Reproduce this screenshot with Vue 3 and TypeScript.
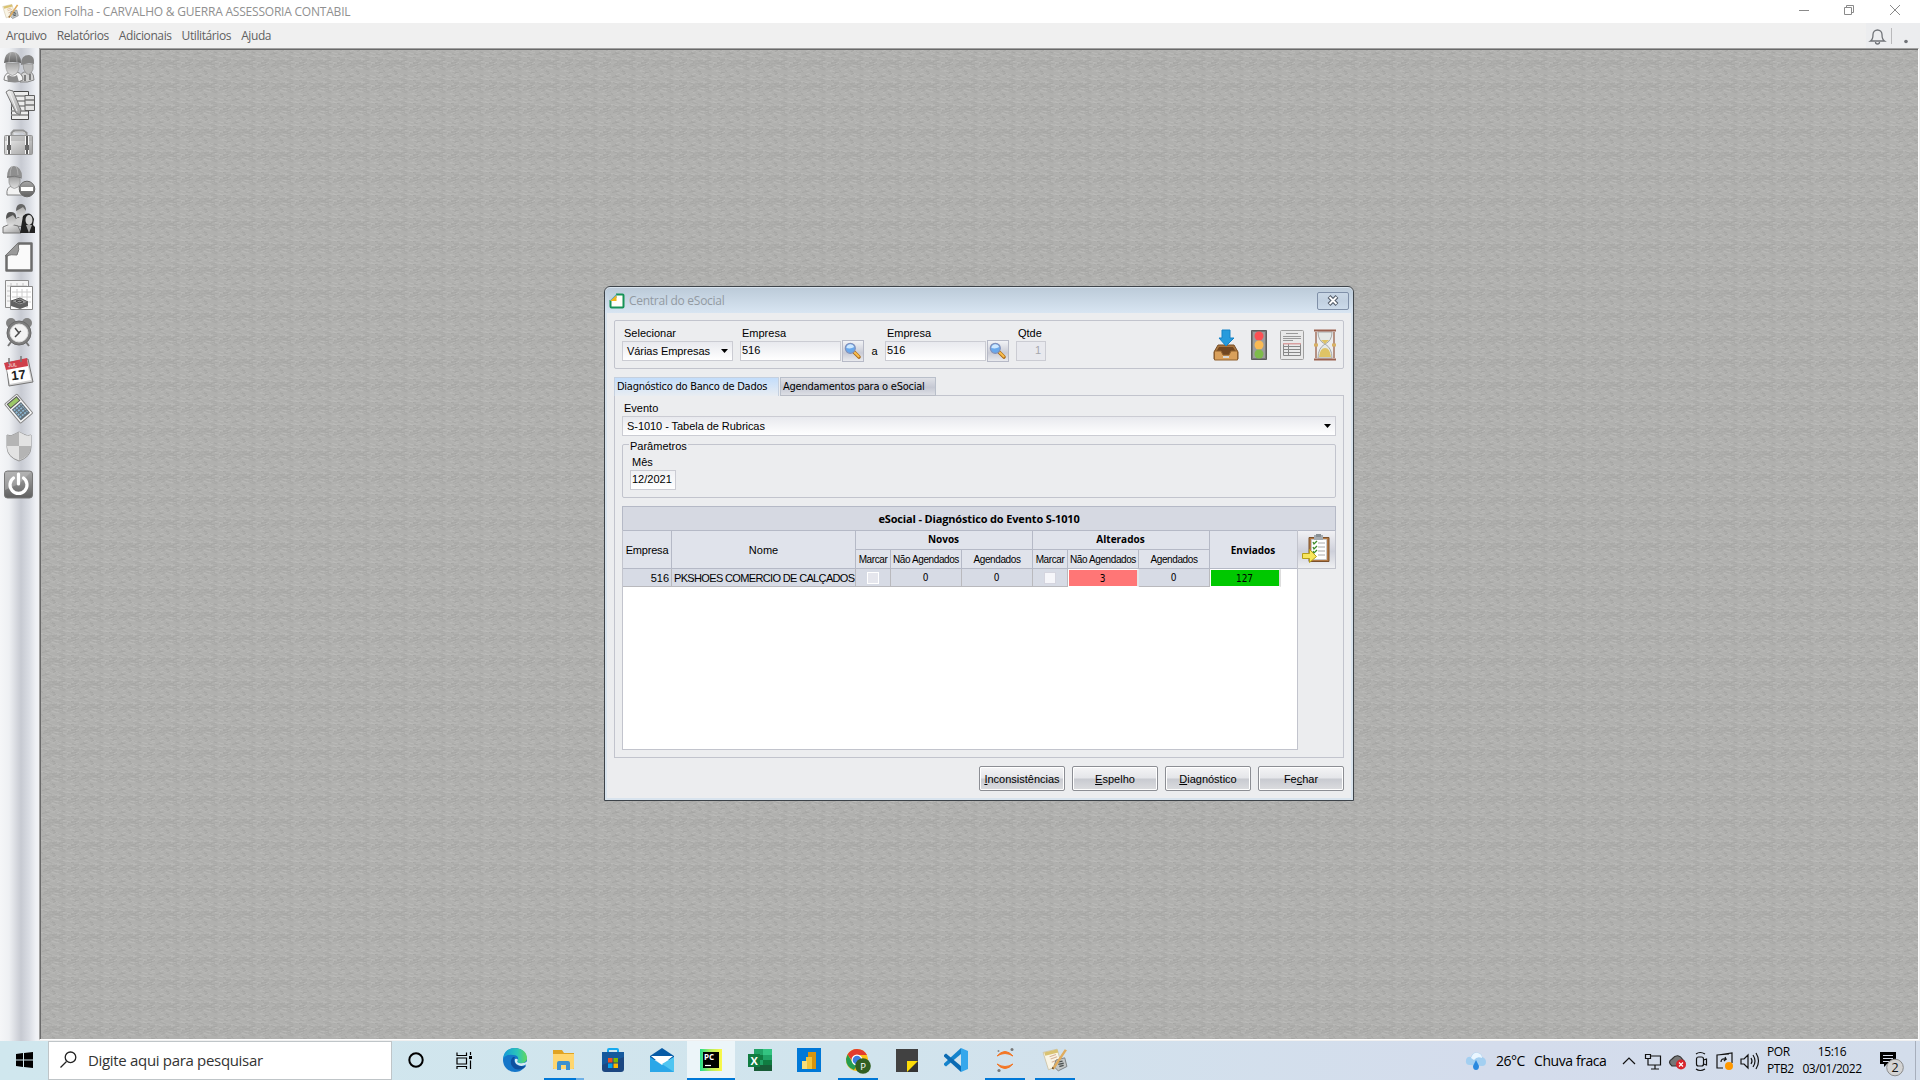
<script setup lang="ts">
import { ref } from 'vue'

interface Stroke { x: number; y: number; w: number; h: number; slope: number; color: string }

// Woven desktop texture: short slanted strokes repeated on a 38 x 23 tile.
function weave(): Stroke[] {
  let seed = 41
  const next = () => {
    seed = (seed * 16807) % 2147483647
    return seed / 2147483647
  }
  const tones = ['#bbbbb9', '#a5a5a3', '#b8b8b6', '#a8a8a6', '#a9a9a7', '#b5b5b3']
  return Array.from({ length: 92 }, (_, i) => ({
    x: Math.round(next() * 35),
    y: Math.round(next() * 21) + 0.5,
    w: 3 + Math.round(next() * 5),
    h: 1,
    slope: next() > 0.45 ? 1.5 : -1.5,
    color: tones[i % tones.length],
  }))
}
const strokes = weave()

const menus = ['Arquivo', 'Relatórios', 'Adicionais', 'Utilitários', 'Ajuda']
const tools = ['workers', 'edit', 'case', 'dismiss', 'people', 'page', 'sheets', 'alarm', 'calendar', 'calc', 'shield', 'power']
const tasks = [
  { id: 'edge', bar: 0 }, { id: 'folder', bar: 32 }, { id: 'store', bar: 0 }, { id: 'mail', bar: 0 },
  { id: 'pycharm', bar: 48 }, { id: 'excel', bar: 0 }, { id: 'powerbi', bar: 0 }, { id: 'chrome', bar: 40 },
  { id: 'notes', bar: 0 }, { id: 'code', bar: 0 }, { id: 'jupyter', bar: 40 }, { id: 'dexion', bar: 40 },
]
const companyFrom = ref('516')
const companyTo = ref('516')
const month = ref('12/2021')
const row = { id: 516, name: 'PKSHOES COMERCIO DE CALÇADOS', newPending: 0, newScheduled: 0, changedPending: 3, changedScheduled: 0, sent: 127 }
</script>

<template>
  <div class="screen">
    <svg width="0" height="0" class="defs">
      <defs>
        <linearGradient id="silver" x1="0" y1="0" x2="1" y2="1"><stop offset="0" stop-color="#f6f6f6" /><stop offset="1" stop-color="#9c9c9c" /></linearGradient>
        <linearGradient id="steel" x1="0" y1="0" x2="0" y2="1"><stop offset="0" stop-color="#a8a8a8" /><stop offset="1" stop-color="#606060" /></linearGradient>
        <linearGradient id="skin" x1="0" y1="0" x2="0" y2="1"><stop offset="0" stop-color="#a0a0a0" /><stop offset=".6" stop-color="#c6c6c6" /><stop offset="1" stop-color="#dedede" /></linearGradient>
        <symbol id="dexion" viewBox="0 0 24 24">
          <path d="M1 5 14 2 18 16 6 21Z" fill="#faf5e5" stroke="#c9bd9d" stroke-width=".7" />
          <path d="m2 5 12-3 1 3-12 3Z" fill="#d9c272" />
          <path d="m7 9 6-2m-5 4 6-2m-5 5 5-2" stroke="#d8b49c" stroke-width="1" />
          <path d="m13 12 8-2 2 8-8 4-4-4Z" fill="#c3c7c7" stroke="#75797a" stroke-width=".8" />
          <path d="m14 14 5-1m-4 3 5-1m-4 3 4-1" stroke="#4e5454" stroke-width="1.3" />
          <path d="m9 20 12-18 2 1L11 21Z" fill="#e0ac5e" /><path d="m9 20 1-2 1 2Z" fill="#5a3b20" />
        </symbol>
        <symbol id="lens" viewBox="0 0 18 18">
          <path d="m10 10 5 5" stroke="#a96817" stroke-width="3.6" stroke-linecap="round" />
          <path d="m10.7 10.5 4 4" stroke="#f9bd4d" stroke-width="2" stroke-linecap="round" />
          <circle cx="6.3" cy="6.3" r="5" fill="#69a8ec" stroke="#8191bc" stroke-width="1.2" />
          <path d="M2.4 6a4 4 0 0 1 7.8-1Q7 7.2 2.4 6Z" fill="#cde7ff" />
        </symbol>
      </defs>
    </svg>

    <header class="titlebar">
      <svg width="17" height="17"><use href="#dexion" /></svg>
      <span class="app-title">Dexion Folha - CARVALHO &amp; GUERRA ASSESSORIA CONTABIL</span>
      <svg class="window-buttons" width="104" height="24" fill="none" stroke="#8a8a8a">
        <path d="M0 10.500h10M45.500 7.500h7v7h-7zM47.500 7.500v-2h7v7h-2M91 5l10 10m0-10L91 15" />
      </svg>
    </header>

    <nav class="menubar">
      <span v-for="item in menus" :key="item">{{ item }}</span>
      <div class="alerts">
        <svg width="54" height="25" fill="none" stroke="#707378">
          <path d="M4.500 18Q7 16.500 7 11.500a4.500 4.500 0 0 1 9 0q0 5 2.500 6.500Z" stroke-width="1.300" /><path d="M9.500 19a2 2 0 0 0 4 0" stroke-width="1.300" />
          <path d="M25.500 5v16" stroke="#b9b9bb" /><circle cx="40" cy="18.500" r="1.800" fill="#707378" stroke="none" />
        </svg>
      </div>
    </nav>

    <main class="body">
      <aside class="toolbar">
        <svg v-for="tool in tools" :key="tool" width="32" height="32" viewBox="0 0 32 32">
          <template v-if="tool === 'workers'">
            <path d="M17 31q-1-8 4-10h7q3 2 3 8-6 3-14 2Z" fill="#d2d2d2" stroke="#707070" stroke-width=".8" />
            <path d="M20 13h10q1 6-2 9-3 3-5 0-3-3-3-9Z" fill="#b9b9b9" stroke="#8f8f8f" stroke-width=".7" /><path d="M18 13q0-9 8-9 6 1 5 9l-5-1-8 2Z" fill="#858585" />
            <path d="M1 29q0-7 7-8h6q6 2 6 8-7 4-19 0Z" fill="#f4f4f4" stroke="#777" stroke-width=".9" />
            <path d="M3 12h13q1 7-3 11-4 3-7 0-4-4-3-11Z" fill="url(#skin)" stroke="#929292" stroke-width=".7" /><path d="M1 12q1-12 9-11 8 1 8 11-8-2-17 0Z" fill="url(#steel)" />
            <path d="m4 25 2-1q4 3 8 0l2 7H5Z" fill="#8d8d8d" /><path d="M22 24v6m5-7v6" stroke="#7d7d7d" stroke-width="2" />
            <path d="M8 1q-2 5-2 10M12 1q2 5 2 10" fill="none" stroke="#bababa" stroke-width=".6" />
          </template>
          <template v-else-if="tool === 'edit'">
            <path d="M8.500 2.500h17v28h-17z" fill="#ededed" stroke="#4b4b4b" /><path d="M8 7h17m-17 5h17m-17 5h17m-17 5h17m-17 4h17" stroke="#888" stroke-width="1.500" />
            <path d="M22 6.500h9.500v15H22z" fill="#e3e3e3" stroke="#616161" /><path d="M22 11h9m-9 5h9" stroke="#777" stroke-width="1.500" />
            <path d="m3 3 3-2 4 1 8 19-1 5-4-2Z" fill="url(#silver)" stroke="#777" /><path d="m7 4 7 18" stroke="#f3f3f3" />
          </template>
          <template v-else-if="tool === 'case'">
            <path d="M9 9V6l2-2h9l3 2v3" fill="none" stroke="#929292" stroke-width="3" /><path d="M10 9V6l2-1h8l2 1v3" fill="none" stroke="#ddd" />
            <rect x="1.500" y="8.500" width="28" height="19" rx="1" fill="url(#silver)" stroke="#969696" /><path d="M2 9h27v5H2Z" fill="#aaa" opacity=".55" />
            <path d="M6 9v18m18-18v18" stroke="#f7f7f7" stroke-width="4" /><path d="M6 9v18m18-18v18" stroke="#5b5b5b" stroke-width="2" /><path d="M4 18h4v5H4zm18 0h4v5h-4z" fill="#666" />
          </template>
          <template v-else-if="tool === 'dismiss'">
            <path d="M4 30q-1-8 5-9h5q6 2 6 9Z" fill="#f2f2f2" stroke="#777" stroke-width=".9" /><path d="M6 12h11q1 7-2 10-4 3-7 0-3-3-2-10Z" fill="url(#skin)" stroke="#929292" stroke-width=".7" />
            <path d="M4 13Q4 1 11 1q8 1 8 11-7-1-15 1Z" fill="#8f8f8f" /><path d="M9 1q-2 4-2 10m6-10q2 4 2 9" stroke="#bbb" stroke-width=".7" fill="none" /><path d="M4 12q8-2 15 1" stroke="#777" fill="none" /><circle cx="24" cy="24" r="7.800" fill="url(#steel)" stroke="#686868" /><rect x="18" y="22" width="12" height="4" fill="#fff" />
          </template>
          <template v-else-if="tool === 'people'">
            <path d="M10 23q0-9 8-9 10 0 11 10Z" fill="#cfcfcf" stroke="#777" /><ellipse cx="18" cy="8" rx="4.500" ry="7" fill="url(#skin)" /><path d="M13 8q0-7 5-7t5 7l-3-4q-3 2-7 4Z" fill="#666" />
            <path d="M0 30v-6l7-3 8 2 3 7Z" fill="url(#silver)" stroke="#777" /><ellipse cx="8" cy="16" rx="5" ry="7" fill="url(#skin)" /><path d="M3 16q0-8 5-7 6 0 5 7l-3-4q-4 2-7 4Z" fill="#555" />
            <path d="m17 30 3-17q7-6 11 3l-1 6 2 2v6Z" fill="#222" /><ellipse cx="26" cy="17" rx="3.500" ry="5" fill="#d3d3d3" /><path d="m23 22 3 8 3-8" fill="#aaa" />
          </template>
          <template v-else-if="tool === 'page'">
            <path d="M3.500 15v14.500h25V2.500H16Z" fill="#fafafa" stroke="#6c6c6c" stroke-width="2.500" stroke-linejoin="round" /><path d="M2 15 15 2q2 7-1 12-5-1-12 1Z" fill="#999" stroke="#777" />
          </template>
          <template v-else-if="tool === 'sheets'">
            <path d="M2.500 1.500h23v27h-23z" fill="#f5f5f5" stroke="#8d8d8d" /><path d="M4 7h20M4 12h20M4 17h20M4 22h20M8 4v21m6-21v21m6-21v21" stroke="#c4c4c4" />
            <path d="M7.500 7.500h22v23h-22z" fill="#fff" stroke="#888" /><path d="M9 13h19M9 18h19M9 23h19M14 10v19m5-19v19m5-19v19" stroke="#cecece" />
            <path d="m8 22 9-3 8 4-8 3Z" fill="#999" stroke="#555" /><path d="m8 22 9 4v4l-9-3Zm9 4 8-3v4l-8 3Z" fill="#626262" /><path d="m13 22 4-1 3 2-4 1Z" fill="none" stroke="#444" />
          </template>
          <template v-else-if="tool === 'alarm'">
            <path d="m8 25-3 4m18-4 3 4M9 5l3 2m9-2-3 2" stroke="#777" stroke-width="2" /><circle cx="8" cy="6" r="5" fill="#828282" /><circle cx="24" cy="6" r="5" fill="#828282" />
            <circle cx="16" cy="16" r="12" fill="#7d7d7d" stroke="#696969" /><circle cx="16" cy="16" r="9" fill="#f3f3f3" stroke="#ddd" /><path d="m12 11 4 5-4 4m3-4 3-2" fill="none" stroke="#494949" stroke-width="1.500" />
          </template>
          <template v-else-if="tool === 'calendar'">
            <path d="m3 8 22-4 5 23-24 4Z" fill="#d3d3d3" stroke="#777" /><path d="m3 10 21-3 4 18-21 4Z" fill="#fff" /><path d="m1 8 23-5 1 8-22 4Z" fill="#cf3f4a" />
            <path d="M6 3v6m12-8v6" stroke="#777" stroke-width="1.500" /><text x="8" y="24.500" font-size="13" font-weight="700" transform="rotate(-7 15 18)" fill="#222">17</text><text x="5" y="12" font-size="5" fill="#fff" transform="rotate(-7 8 11)">JUL</text>
          </template>
          <template v-else-if="tool === 'calc'">
            <g transform="rotate(-40 16 16)"><rect x="8" y="3" width="16" height="25" rx="1" fill="#f8f8f8" stroke="#888" /><path d="M10 5h12v5H10z" fill="#9cc867" stroke="#555" /><path d="M10 12h12v14H10z" fill="#657179" /><path d="M11 14h10m-10 3h10m-10 3h10m-10 3h10" stroke="#8cb8d4" stroke-width="1.800" stroke-dasharray="2 1" /></g>
          </template>
          <template v-else-if="tool === 'shield'">
            <path d="m16 1 4 2q5 3 8 1v12q0 10-12 14Q4 26 4 16V4q4 2 8-1Z" fill="#d9d9d9" stroke="#969696" /><path d="M16 1v14H4V4q4 2 8-1Z" fill="#b5b5b5" /><path d="M16 15H4q0 10 12 14Zm0-14v14h12V4q-4 2-8-1Z" fill="#e2e2e2" /><path d="M16 15h12q0 10-12 14Z" fill="#b4b4b4" />
          </template>
          <template v-else>
            <rect x="1.500" y="2" width="28" height="27" rx="3" fill="url(#steel)" stroke="#777" /><path d="M2 3h26L16 15 2 21Z" fill="#c9c9c9" opacity=".4" /><path d="M10.500 9a8.500 8.500 0 1 0 10 0M15.500 5v10" fill="none" stroke="#fff" stroke-width="3.200" stroke-linecap="round" />
          </template>
        </svg>
      </aside>

      <section class="workspace">
        <svg class="texture" width="100%" height="100%">
          <defs>
            <pattern id="weave" width="38" height="23" patternUnits="userSpaceOnUse">
              <rect width="38" height="23" fill="#b0b0ae" />
              <path v-for="(s, i) in strokes" :key="i" :d="`M${s.x} ${s.y}l${s.w} ${s.slope}`" :stroke="s.color" :stroke-width="s.h" />
            </pattern>
          </defs>
          <rect width="100%" height="100%" fill="url(#weave)" />
        </svg>

        <div class="dialog">
          <div class="dialog-title">
            <svg width="16" height="16"><path d="M6 1.500h7.500q1 0 1 1v11q0 1-1 1h-11q-1 0-1-1V6Z" fill="#fffef8" stroke="#179357" stroke-width="2" /><path d="M0 0h7v7H0Z" fill="#c4d2df" /><path d="M1 7.500 7.500 1v3.500L4.500 8H1Z" fill="#299ed8" /><path d="M1 8 7.500 2v6Z" fill="#f3b61d" /></svg>
            <span>Central do eSocial</span>
            <button class="close"><svg width="14" height="11"><path d="m3 1.500 8 8m0-8-8 8" stroke="#535d69" stroke-width="4" /><path d="m3.500 2 7 7m0-7-7 7" stroke="#fff" stroke-width="1.800" /></svg></button>
          </div>

          <div class="filter">
            <div class="field kind"><label>Selecionar</label><div class="combo"><span>Várias Empresas</span><svg width="7" height="4"><path d="M0 0h7L3.500 4Z" /></svg></div></div>
            <div class="field company"><label>Empresa</label><div class="lookup"><div class="input">{{ companyFrom }}</div><button class="find"><svg width="18" height="18"><use href="#lens" /></svg></button></div></div>
            <span class="between">a</span>
            <div class="field company"><label>Empresa</label><div class="lookup"><div class="input">{{ companyTo }}</div><button class="find"><svg width="18" height="18"><use href="#lens" /></svg></button></div></div>
            <div class="field amount"><label>Qtde</label><div class="input disabled">1</div></div>
            <div class="actions">
              <svg width="24" height="31"><path d="m4 15-4 7v7h24v-7l-4-7Z" fill="#a9753e" stroke="#78502b" /><path d="M5 17h14l3 5h-5l-2 3H9l-2-3H2Z" fill="#714620" /><path d="M.500 21H7l2 4h6l2-4h6.500v9H.500Z" fill="#d9a05b" stroke="#8f602e" /><path d="M9 27h6" stroke="#d8d8d5" stroke-width="2" /><path d="M8 0h8v8h4l-8 8-7-8h3Z" fill="#279bdc" stroke="#1683c6" /></svg>
              <svg width="16" height="31"><path d="M.500.500h15v29H.500Z" fill="#777" stroke="#5d5d5d" /><path d="M2 2h12v26H2Z" fill="#9c9c9c" /><circle cx="8" cy="6" r="4.500" fill="#fb5053" /><circle cx="8" cy="15" r="4.500" fill="#faba53" /><circle cx="8" cy="24" r="4.500" fill="#7ebb4b" /></svg>
              <svg width="24" height="31"><rect x=".5" y=".5" width="23" height="29" rx="1" fill="#e9e9e9" stroke="#a0a0a0" /><path d="M6 3.500h12M3 6.500h18M3 8.500h18M3 10.500h10" stroke="#999" /><path d="M3.500 13.500h17v12h-17zm0 3h17m-17 3h17m-17 3h17M8.500 14v12" fill="none" stroke="#888" /><path d="M3 13h18v1.500H3Z" fill="#d9a0a0" /></svg>
              <svg width="22" height="32"><path d="M4 3h14q0 9-7 12-7-3-7-12Zm7 12q7 4 7 14H4q0-10 7-14Z" fill="#e5e9e6" stroke="#a8aaa8" /><path d="M7 11h8l-4 4Zm-2 17q1-9 6-9t6 9Z" fill="#dfc365" /><path d="M2 3v26M20 3v26" stroke="#b08878" stroke-width="1.800" /><path d="M0 1.500h22M0 30.500h22" stroke="#9b6250" stroke-width="2" /><path d="M0 16h4m14 0h4" stroke="#d9b264" stroke-width="3" /></svg>
            </div>
          </div>

          <div class="tabs">
            <div class="tab active"><span>Diagnóstico do Banco de Dados</span></div>
            <div class="tab second"><span>Agendamentos para o eSocial</span></div>
            <div class="tab-rest"></div>
          </div>

          <div class="page">
            <label class="event-label">Evento</label>
            <div class="combo event"><span>S-1010 - Tabela de Rubricas</span><svg width="7" height="4"><path d="M0 0h7L3.500 4Z" /></svg></div>
            <div class="params"><span class="legend">Parâmetros</span><label>Mês</label><div class="input month">{{ month }}</div></div>

            <div class="grid-title">eSocial - Diagnóstico do Evento S-1010</div>
            <div class="grid-area">
              <div class="grid">
                <div class="head">
                  <div class="cell tall id">Empresa</div><div class="cell tall who">Nome</div>
                  <div class="cell group new">Novos</div><div class="cell group changed">Alterados</div>
                  <div class="cell tall strong">Enviados</div>
                  <div class="cell small">Marcar</div><div class="cell small">Não Agendados</div><div class="cell small">Agendados</div>
                  <div class="cell small">Marcar</div><div class="cell small">Não Agendados</div><div class="cell small">Agendados</div>
                </div>
                <div class="row">
                  <div class="cell right">{{ row.id }}</div><div class="cell name"><span>{{ row.name }}</span></div>
                  <div class="cell"><i class="check off"></i></div><div class="cell num">{{ row.newPending }}</div><div class="cell num">{{ row.newScheduled }}</div>
                  <div class="cell"><i class="check"></i></div><div class="cell num pending">{{ row.changedPending }}</div><div class="cell num">{{ row.changedScheduled }}</div>
                  <div class="cell num sent">{{ row.sent }}</div>
                </div>
              </div>
              <button class="clipboard">
                <svg width="30" height="32"><path d="M7 3.500h20v24H7Z" fill="#b27945" stroke="#7a502b" /><path d="M9.500 5.500h15v20h-15Z" fill="#fff" stroke="#c9c9c9" /><path d="M12 1h9v5h-9Z" fill="#a5abb0" /><path d="M14 0h5v3h-5Z" fill="#888f94" /><path d="M16 9h7m-7 4h7m-7 4h7m-7 4h7" stroke="#aaa" /><path d="m11 8 1 2 3-3m-4 6 1 2 3-3m-4 5 1 2 3-3" fill="none" stroke="#3e8b28" stroke-width="1.300" /><path d="M.500 19.500h7v-4l7 7-7 6v-4h-7Z" fill="#f8e65c" stroke="#b69f18" /></svg>
              </button>
            </div>
          </div>

          <div class="footer">
            <button><span><u>I</u>nconsistências</span></button><button><span><u>E</u>spelho</span></button><button><span><u>D</u>iagnóstico</span></button><button><span>Fe<u>c</u>har</span></button>
          </div>
        </div>
      </section>
    </main>

    <footer class="taskbar">
      <div class="start"><svg width="17" height="18"><path d="m0 3 7-1v6.500H0Zm8-1 9-1v7.500H8ZM0 9.500h7V16l-7-1Zm8 0h9V17l-9-1Z" /></svg></div>
      <div class="search"><svg width="17" height="18" fill="none" stroke="#222" stroke-width="1.300"><circle cx="10.500" cy="6.300" r="5.300" /><path d="m6.500 10.500-6 6" /></svg><span>Digite aqui para pesquisar</span></div>
      <div class="sys"><svg width="16" height="16"><circle cx="8" cy="8" r="6.700" fill="none" stroke="#000" stroke-width="2" /></svg></div>
      <div class="sys"><svg width="17" height="17" fill="none" stroke="#000" stroke-width="1.200"><path d="M1 .500v3h9.500v-3M1 6h9.500v6H1zM1 17v-2.500h9.500V17M14.500 0v3M14.500 8.500V17" /><path d="M13 4h3v3h-3z" fill="#000" stroke="none" /></svg></div>
      <div v-for="task in tasks" :key="task.id" class="task" :class="{ current: task.id === 'pycharm' }">
        <svg width="26" height="26" viewBox="0 0 26 26">
          <template v-if="task.id === 'edge'">
            <defs><linearGradient id="edgeTop"><stop stop-color="#1399d9" /><stop offset=".6" stop-color="#2bc5b9" /><stop offset="1" stop-color="#62d85c" /></linearGradient></defs>
            <circle cx="13" cy="13" r="12" fill="#1476c9" /><path d="M1 12Q2 1 13 1q12 1 12 11-1 5-8 4-3-1-1-3 1-5-5-5Q4 7 1 12Z" fill="url(#edgeTop)" /><path d="M11 10q-4 4-1 9 4 6 12 2l2-2q-8 1-11-3-2-3 0-6Z" fill="#0e4f9e" /><path d="M13 12q-1 4 3 6 4 2 8-.5l1.500.5V14q-3 3-8.500 2-3-1-1-3-1-2-3-1Z" fill="#d6ebf3" />
          </template>
          <template v-else-if="task.id === 'folder'"><path d="M2 3h9l2 3h10v16H2Z" fill="#e0a322" /><path d="M2 7h21v14q0 1-1 1H3q-1 0-1-1Z" fill="#ffd66f" /><path d="M6 23v-7q0-2 2-2h9q2 0 2 2v7h-4v-5h-5v5Z" fill="#3c91d0" /></template>
          <template v-else-if="task.id === 'store'"><path d="M8 6V3q0-1 1-1h8q1 0 1 1v3" fill="none" stroke="#16aaf0" stroke-width="2" /><path d="M2 5h22v17q0 3-3 3H5q-3 0-3-3Z" fill="#1c4781" /><path d="M2 5h22v5L2 18Z" fill="#1261a9" opacity=".7" /><path fill="#f24f22" d="M8 11h4.500v4.500H8z" /><path fill="#7eb900" d="M13.500 11H18v4.500h-4.500z" /><path fill="#00a3ee" d="M8 16.500h4.500V21H8z" /><path fill="#feb800" d="M13.500 16.500H18V21h-4.500z" /></template>
          <template v-else-if="task.id === 'mail'"><path d="M1 9 13 1l12 8v4H1Z" fill="#075ba6" /><path d="m2 9 22 0-11 9Z" fill="#fff" /><path d="m1 10 12 8 12-8v15H1Z" fill="#2aa7e8" /><path d="m13 17 12-7v15Z" fill="#50c5f1" /></template>
          <template v-else-if="task.id === 'pycharm'"><defs><linearGradient id="pc"><stop stop-color="#22dc8b" /><stop offset=".5" stop-color="#b9ed5c" /><stop offset="1" stop-color="#fcf84a" /></linearGradient></defs><path fill="url(#pc)" d="M2 2h22v22H2z" /><path d="M5 5h16v16H5z" /><text x="6" y="13" font-size="8" font-weight="700" fill="#fff">PC</text><path d="M7 18.500h6" stroke="#fff" stroke-width="1.200" /></template>
          <template v-else-if="task.id === 'excel'"><path d="M7 2h18v22H7z" fill="#21a366" /><path d="M16 2h9v6h-9z" fill="#33c481" /><path d="M7 8h9v5H7zm9 5h9v5h-9z" fill="#107c41" /><path d="M7 18h18v6H7z" fill="#185c37" /><path d="M1 7h12v13H1z" fill="#107c41" /><text x="3.500" y="17.500" font-size="11" font-weight="700" fill="#fff">X</text></template>
          <template v-else-if="task.id === 'powerbi'"><path d="M1 1h24v24H1z" fill="#0078d7" /><path d="M14 5h6v17h-8V5Z" fill="#d5940f" /><path d="M10 10h6v12h-6Z" fill="#f1c43a" /><path d="M6 14h5v8H6Z" fill="#f8df79" /></template>
          <template v-else-if="task.id === 'chrome'"><circle cx="12" cy="13" r="11" fill="#fbc116" /><path d="M2.500 7.500Q6 2 12 2q7 0 10 6H12v5l-3 3Z" fill="#e33b2e" /><path d="M2.500 7.500 8 16l4 1.500L9 23Q1 20 1 12Z" fill="#249d51" /><circle cx="12" cy="13" r="5.500" fill="#fff" /><circle cx="12" cy="13" r="4.300" fill="#3e7de0" /><circle cx="18" cy="19" r="7.800" fill="#315f22" /><text x="15.300" y="22.500" font-size="9.500" fill="#fff">P</text></template>
          <template v-else-if="task.id === 'notes'"><path d="M2 2h22v12L13 25H2z" fill="#414141" /><path d="M13 14h11v11H13z" fill="#333" /><path d="M13 14h11L13 25Z" fill="#fddc07" /></template>
          <template v-else-if="task.id === 'code'"><path d="m1 18 2 1.500L18 7V1L1 16.500Z" fill="#1483cc" /><path d="m1 8 2-1.500L18 19v6L1 9.500Z" fill="#0b6bb3" /><path d="m18 1 7 3v18l-7 3Z" fill="#35a7ec" /></template>
          <template v-else-if="task.id === 'jupyter'"><path d="M5 9q8-9 16 0-8-5-16 0Zm0 8q8 9 16 0-8 5-16 0Z" fill="#f37726" stroke="#f37726" /><circle cx="20" cy="2.500" r="1.500" fill="#777" /><circle cx="6.500" cy="4" r="1" fill="#888" /><circle cx="7" cy="23.500" r="1.600" fill="#777" /></template>
          <use v-else href="#dexion" />
        </svg>
        <b v-if="task.bar" :class="{ stacked: task.id === 'folder' }" :style="{ width: task.bar + 'px' }"></b>
      </div>
      <div class="tray">
        <svg width="22" height="20" class="cloud"><path d="M5 14Q0 14 1 9q1-4 5-3 2-6 8-4 3 1 3 4 4 1 4 5 0 4-4 4Z" fill="#a3cff1" /><path d="M6 7q2-6 7-5 4 1 4 5-5-2-8 2Z" fill="#eaf6ff" /><path d="m11 9-3 6q0 4 3 4t3-4Z" fill="#2a89df" /></svg>
        <span class="temp">26°C</span><span class="weather">Chuva fraca</span>
        <svg class="status" width="142" height="24" fill="none" stroke="#111" stroke-width="1.200">
          <path d="m1 15 6-6 6 6" />
          <path d="M29 7h9.500v9H26v-5M33 16v4m-4 0h8M23.500 5.500h5v4h-5ZM26 10v3" />
          <path d="M50 17q-5-4 0-7 6-7 11 1 3 2 1 6Z" fill="#777" stroke="#333" /><circle cx="59" cy="15.500" r="5" fill="#d9252c" stroke="none" /><path d="m57 13.500 4 4m0-4-4 4" stroke="#fff" />
          <rect x="74.500" y="8" width="7" height="9" rx="2" /><path d="m81.500 11 3-1v6l-3-1M74 5q4-3 9 0M74 20q4 3 9 0" />
          <path d="m107 5-12 1v13h6M96 6l14-2v10" /><path d="M99 13q0-4 5-3l-1-2m1 2-2 2" /><circle cx="107" cy="17" r="4" fill="#ff9800" stroke="none" />
          <path d="M119 10h3l4-4v13l-4-4h-3Zm10-1q2 3 0 6m2-9q4 6 0 12m3-14q5 8 0 16" />
        </svg>
        <div class="stack lang"><span>POR</span><span>PTB2</span></div>
        <div class="stack clock"><span>15:16</span><span>03/01/2022</span></div>
        <div class="notice"><svg width="26" height="26"><path d="M1 1h16v12H8l-3 3v-3H1Z" /><path d="M4 4.500h10M4 7.500h10M4 10.500h7" stroke="#d5dceb" /><circle cx="16" cy="16.500" r="8.300" fill="#d3d3d3" stroke="#888" /><text x="12.500" y="21" font-size="12.500" fill="#111">2</text></svg></div>
      </div>
    </footer>
  </div>
</template>

<style>
html, body { margin: 0; overflow: hidden; }
</style>

<style scoped>
* { box-sizing: border-box; }
.screen { width: 1920px; height: 1080px; display: flex; flex-direction: column; background: #fff; font-family: "Open Sans", "Noto Sans", sans-serif; font-size: 12px; color: #000; white-space: nowrap; }
.defs { position: absolute; }
svg { display: block; flex: none; overflow: visible; }
button { padding: 0; font: inherit; color: inherit; }
.titlebar { height: 23px; display: flex; align-items: center; padding-left: 2px; flex: none; }
.app-title { margin-left: 4px; color: #909090; letter-spacing: -.21px; }
.window-buttons { margin-left: auto; margin-right: 17px; }
.menubar { height: 25px; flex: none; display: flex; gap: 10px; align-items: center; padding-left: 6px; background: #f0f0f0; color: #606060; letter-spacing: -.4px; }
.alerts { margin-left: auto; width: 54px; height: 25px; background: #ecedef; }
.body { height: 993px; flex: none; display: flex; background: #f0f0f0; }
.toolbar { width: 39px; padding: 3px 0 0 3px; flex: none; display: flex; flex-direction: column; gap: 6px; background: linear-gradient(90deg, #f5f6f8, #eef0f3 9px, #c7cad2 21px, #d9dce3 29px, #eff1f5 36px, #f2f3f5); font-family: "Liberation Sans", sans-serif; }
.workspace { position: relative; width: 1880px; height: 992px; border: 1px solid #fff; border-top-color: #a0a0a0; border-left-color: #a0a0a0; background: #696969; padding: 1px 0 0 1px; }
.texture { width: 100%; height: 100%; }
.dialog { position: absolute; left: 564px; top: 237px; width: 750px; height: 515px; padding: 1px 9px 0 10px; border: 1px solid #3d4349; border-radius: 6px 6px 0 0; background: #ecedef; box-shadow: inset 0 0 0 2px #d9e4ee; display: flex; flex-direction: column; font-family: "Liberation Sans", Arial, sans-serif; font-size: 11px; }
.dialog-title { height: 25px; margin: 0 -9px 0 -10px; padding: 0 4px; flex: none; display: flex; align-items: center; background: linear-gradient(#bccbd9, #d8e5f2); border-radius: 5px 5px 0 0; color: #929aa2; font: 12px "Open Sans", sans-serif; }
.dialog-title span { margin-left: 4px; letter-spacing: -.27px; }
.close { margin-left: auto; width: 32px; height: 18px; border: 1px solid #8090a8; border-radius: 2px; background: linear-gradient(#c9d7e5, #c1d0e0 50%, #ccdbea); display: flex; align-items: center; justify-content: center; }
.filter { height: 49px; width: 730px; margin: 7px 0 0 -1px; padding: 6px 7px 0; flex: none; border: 1px solid #c2c4cd; border-radius: 2px; display: flex; }
.field { display: flex; flex-direction: column; }
.field label { height: 14px; line-height: 12px; padding-left: 2px; }
.kind { width: 111px; margin-right: 7px; }
.combo { height: 20px; flex: none; border: 1px solid #cbccd3; background: linear-gradient(#e8e9ee, #fff); display: flex; align-items: center; justify-content: space-between; padding: 0 4px; letter-spacing: -.05px; }
.company { width: 124px; }
.lookup { display: flex; gap: 1px; align-items: flex-start; }
.input { width: 101px; height: 20px; line-height: 17px; padding-left: 1px; border: 1px solid #cbccd3; background: linear-gradient(#e8e9ee, #fff); }
.find { width: 22px; height: 22px; margin-top: -1px; border: 1px solid #b7bac7; background: linear-gradient(#f2f3f6, #c9cbd5 60%, #e9eaee); display: flex; align-items: center; justify-content: center; }
.between { width: 21px; text-align: center; padding-top: 18px; }
.amount { width: 30px; margin-left: 7px; }
.disabled { width: 30px; color: #a5a7ac; background: #e8e9ee; text-align: right; padding-right: 4px; }
.actions { margin: 3px 0 0 auto; display: flex; align-items: flex-start; gap: 13px; }
.actions svg:last-child { margin: -1px 0 0 -3px; }
.tabs { height: 19px; width: 730px; margin: 8px 0 0 -1px; flex: none; display: flex; font: 11px "DejaVu Sans Condensed", "Open Sans", sans-serif; letter-spacing: -.25px; }
.tab { display: flex; align-items: center; padding: 0 0 1px 2px; border: 1px solid #b9bfca; border-bottom: 0; }
.active { width: 165px; background: linear-gradient(#c3ddfb, #e9edf2); border-color: #c5d0df; }
.second { width: 156px; margin-left: 1px; background: linear-gradient(#dfe1e7, #c5c8d3 55%, #dddfe5); border-bottom: 1px solid #b9bcc5; }
.tab-rest { flex: 1; border-bottom: 1px solid #c2c4cd; }
.page { width: 730px; height: 362px; margin-left: -1px; padding: 0 7px; flex: none; border: 1px solid #c2c4cd; border-top: 0; display: flex; flex-direction: column; }
.event-label { flex: none; padding-left: 2px; height: 20px; line-height: 24px; }
.event { padding-right: 4px; }
.params { height: 54px; flex: none; margin-top: 8px; padding: 0 7px; border: 1px solid #c2c4cd; border-radius: 2px; display: flex; flex-direction: column; align-items: flex-start; }
.legend { margin-top: -5px; margin-left: -1px; padding: 0 1px; height: 13px; line-height: 13px; background: #ecedef; }
.params label { padding-left: 2px; height: 17px; line-height: 18px; }
.month { width: 46px; background: linear-gradient(#f0f1f4, #fff); }
.grid-title { height: 24px; margin-top: 8px; flex: none; border: 1px solid #b5b9c6; border-bottom: 0; background: #d6d9e2; display: flex; align-items: center; justify-content: center; font: 700 11px "Open Sans", sans-serif; letter-spacing: -.15px; }
.grid-area { display: flex; align-items: flex-start; height: 220px; }
.grid { width: 676px; height: 220px; flex: none; background: #fff; border: 1px solid #c2c4cd; border-top: 0; }
.head { display: grid; grid-template-columns: 49px 184px 35px 71px 71px 35px 71px 71px 87px; grid-template-rows: 19px 19px; border-top: 1px solid #b5b9c6; background: #e0e3eb; height: 39px; }
.cell { border-right: 1px solid #b5b9c6; border-bottom: 1px solid #b5b9c6; display: flex; align-items: center; justify-content: center; overflow: hidden; }
.tall { grid-row: 1 / 3; padding-top: 1px; }
.id { grid-column: 1; letter-spacing: -.2px; }
.who { grid-column: 2; }
.group { grid-row: 1; font: 700 10px "Open Sans", sans-serif; padding: 0 1px 2px 0; }
.new { grid-column: 3 / 6; }
.changed { grid-column: 6 / 9; }
.strong { grid-column: 9; font: 700 10px "Open Sans", sans-serif; border-right: 0; padding-right: 1px; }
.small { grid-row: 2; font-size: 10px; letter-spacing: -.4px; }
.row { width: 658px; height: 18px; display: grid; grid-template-columns: 49px 184px 35px 71px 71px 35px 71px 71px 71px; background: #d7dbe5; }
.row .cell { border-color: #b9b9bd; }
.row .right { justify-content: flex-end; padding-right: 2px; }
.row .name { justify-content: flex-start; padding-left: 2px; letter-spacing: -.65px; }
.num { font: 10px "DejaVu Sans Condensed", sans-serif; padding-right: 1px; }
.row .pending { background: #ff7676; border: 1px solid #fff; border-right: 2px solid #e4e4e6; }
.row .sent { background: #00c800; border: 1px solid #fff; border-right: 2px solid #ddd; }
.check { width: 12px; height: 12px; background: #f6f6fa; border: 1px solid #fff; outline: 1px solid #d5d5df; outline-offset: -1px; }
.off { background: #e5e6ed; outline: 0; }
.clipboard { flex: 1; height: 39px; padding: 1px 0 0 1px; border: 0; border-top: 1px solid #b5b9c6; border-right: 1px solid #c2c4cd; border-bottom: 1px solid #c2c4cd; background: linear-gradient(#f1f1f4, #ced0da 55%, #eeeff1); display: flex; align-items: center; justify-content: center; }
.footer { display: flex; justify-content: flex-end; gap: 7px; padding-top: 8px; }
.footer button { width: 86px; height: 25px; border: 1px solid #8c8e94; border-radius: 2px; background: linear-gradient(#f5f5f6, #e4e5e9 48%, #c8cad0 52%, #dcdde0); box-shadow: inset 0 0 0 1px #fff; }
u { text-underline-offset: 1px; }
.taskbar { height: 39px; flex: none; display: flex; background: linear-gradient(90deg, #d0e7ee, #d1e4ed 45%, #d4dcec 78%, #d3ddeb); }
.start { width: 48px; padding-bottom: 1px; display: flex; align-items: center; justify-content: center; }
.search { width: 344px; border: 1px solid #bfc5c8; background: #fff; display: flex; align-items: center; padding: 0 0 2px 11px; font-size: 15px; color: #333; }
.search span { margin-left: 11px; letter-spacing: -.32px; }
.sys { width: 48px; padding-bottom: 1px; display: flex; align-items: center; justify-content: center; }
.sys:nth-of-type(4) { margin-right: 2.500px; }
.task { position: relative; width: 49.050px; height: 39px; padding-bottom: 2px; display: flex; align-items: center; justify-content: center; }
.task text { font-family: "Open Sans", sans-serif; }
.current { background: linear-gradient(#ecf5f9, #ecf5f9) center / 48px 100% no-repeat; }
.task b { position: absolute; bottom: 0; height: 2px; background: #0078d7; }
.task .stacked { box-shadow: 8px 0 #6eb0e6; left: 4px; }
.tray { flex: 1; display: flex; align-items: center; font-size: 14px; }
.cloud { margin-left: auto; }
.temp { margin-left: 9px; width: 38px; letter-spacing: -.5px; padding-bottom: 1px; }
.weather { width: 88px; letter-spacing: -.42px; padding-bottom: 1px; }
.stack { display: flex; flex-direction: column; font-size: 12px; line-height: 17.500px; letter-spacing: -.45px; padding-bottom: 1px; }
.lang { margin-left: 3px; width: 36px; }
.clock { width: 58px; align-items: center; }
.notice { width: 55px; height: 39px; padding: 10px 0 0 18px; border-right: 1px solid #a7afbc; margin-right: 4px; }
</style>
